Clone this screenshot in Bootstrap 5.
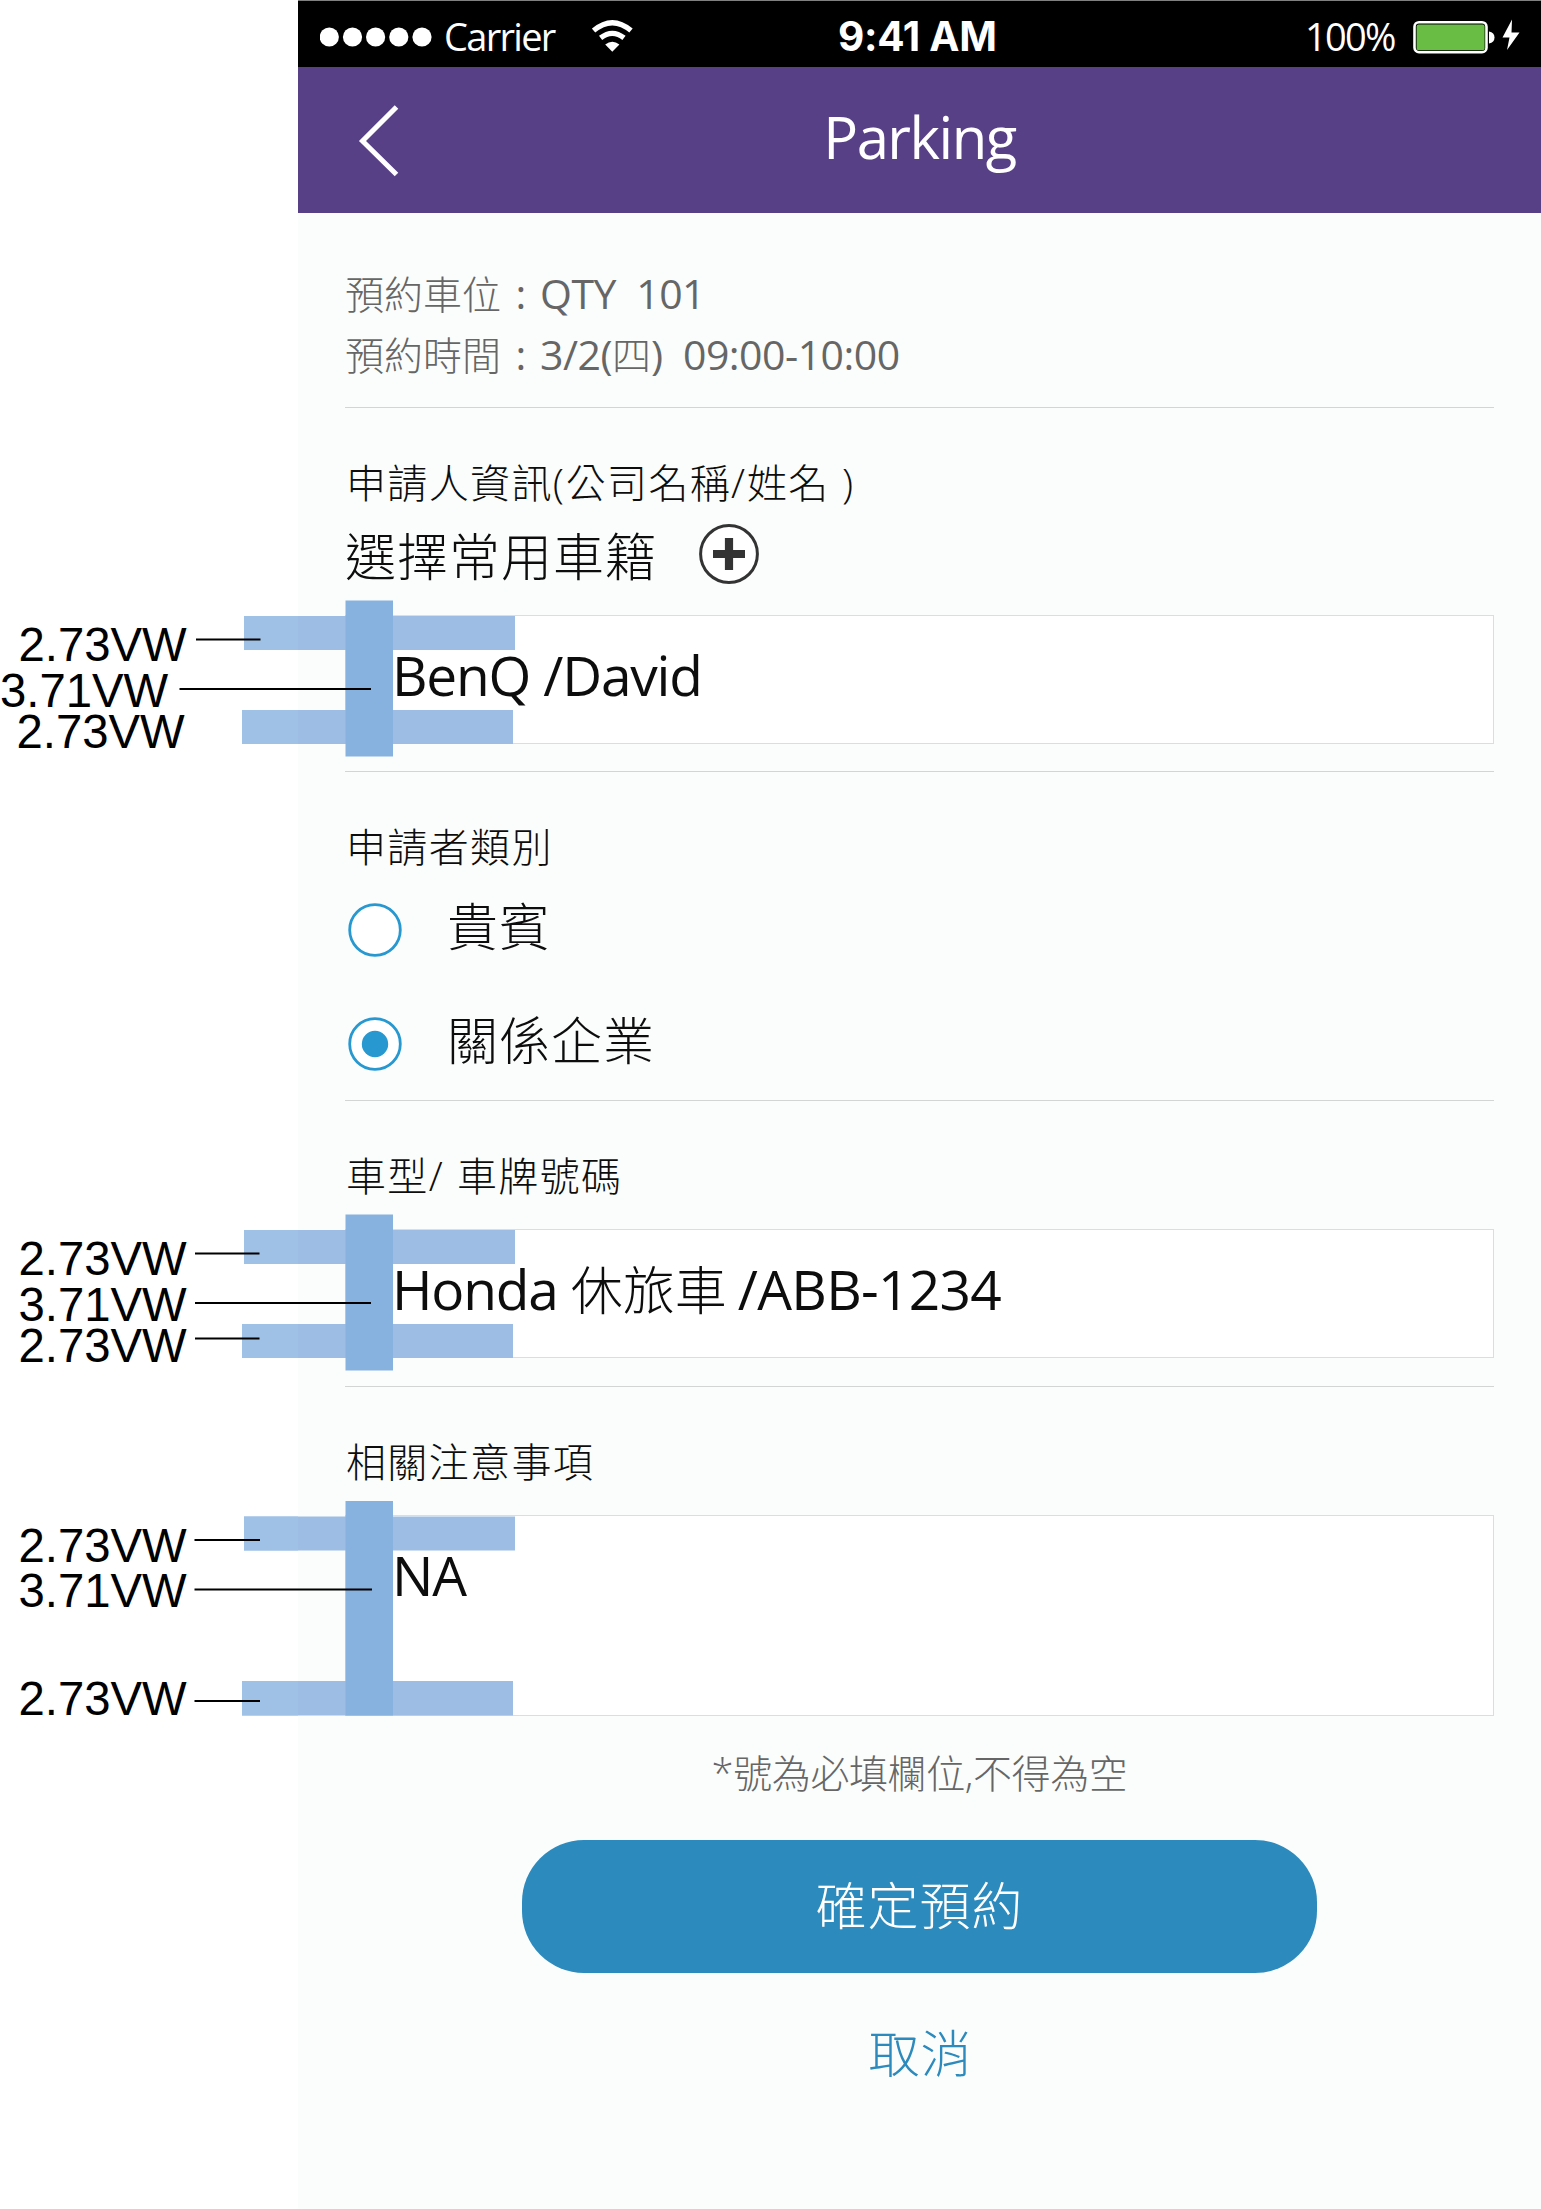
<!DOCTYPE html>
<html lang="zh-Hant">
<head>
<meta charset="utf-8">
<meta name="viewport" content="width=device-width, initial-scale=1">
<title>Parking</title>
<link href="https://cdn.jsdelivr.net/npm/bootstrap@5.3.0/dist/css/bootstrap.min.css" rel="stylesheet">
<style>
body{background:#fff;font-family:"Noto Sans CJK TC",sans-serif;color:#0d0d0d;font-weight:300;overflow-x:hidden}
.phone{width:1243px;height:2209px;background:#fbfdfc}
.lat{font-family:"Open Sans","Noto Sans CJK TC",sans-serif;font-weight:400;white-space:pre}
.statusbar{height:67px;background:#000;color:#fff;white-space:nowrap;padding-left:22px;padding-top:2px;border-top:1px solid #808080}
.statusbar svg{display:block;flex:none}
.status-text{font-family:"Open Sans",sans-serif;font-weight:400;font-size:38px;letter-spacing:-1.7px;line-height:56px;padding-top:5px}
.carrier{margin-left:11px;width:148px}
.clock{font-family:Inter,sans-serif;font-weight:700;font-size:40.5px;letter-spacing:-.3px;line-height:56px;margin-left:205px;width:159px;padding-top:6px}
.percent{margin-left:308px;width:108px}
.titlebar{height:146px;background:#584087;color:#fff}
.titlebar h1{font-size:58px;line-height:80px;letter-spacing:-1.5px;padding-bottom:6px;margin-right:104px}
.back{width:50px;height:80px;margin-left:54px}
.sect{margin:0 47px;border-bottom:1px solid #d3d5d4;white-space:nowrap;padding-top:43px}
.s-info{height:195px;padding-top:50px;color:#666}
.s-applicant{height:364px}
.s-type{height:329px}
.s-car{height:286px}
.s-notes{border-bottom:0}
.info{font-size:39px;line-height:59.5px}
.info .lat{font-size:41px;letter-spacing:-.5px}
.info .colon{display:inline-block;width:39px;text-align:center}
.lab{font-size:40px;line-height:60px;letter-spacing:1.35px;padding-left:1px}
.lab .lat{font-size:41px;letter-spacing:1.8px;font-weight:300}
.big{font-size:51px;letter-spacing:1px}
.pick{height:84px}
.pick svg{margin-left:41px;margin-top:-1px}
.field{height:129px;background:#fff;border:1px solid #dcdedd;padding:21px 0 0 46px}
.field.tall{height:201px;padding-top:21px}
.slot-a{margin-top:19px}
.slot-b{margin-top:24px}
.slot-c{margin-top:25px}
.val{font-size:55px;line-height:76px;letter-spacing:-1.2px}
.cj{font-size:52px;font-weight:300;letter-spacing:0;margin-right:-2px}
.plate{letter-spacing:-.7px}
.opt{height:114px}
.opt .big{margin-left:44px;padding-bottom:12px}
.opts{margin-top:-2px}
.spec{position:absolute;left:-345px;top:-20px;pointer-events:none}
.spec text{font:47.3px "Liberation Sans",Arial,sans-serif;fill:#000}
.hint{font-size:39px;line-height:60px;letter-spacing:-.4px;color:#666;margin-top:25px}
.hint .lat{font-size:40px;font-weight:300}
.btn-book{width:795px;height:133px;border-radius:62px;background:#2c8abd;color:#fff;font-weight:300;margin-top:37px;padding:0 0 6px}
.cancel{color:#2c8abd;line-height:60px;margin-top:48px;margin-left:2px;text-decoration:none}
</style>
<script src="https://cdn.jsdelivr.net/npm/bootstrap@5.3.0/dist/js/bootstrap.bundle.min.js"></script>
</head>
<body>
<main class="phone ms-auto">
  <div class="statusbar d-flex align-items-start">
    <svg width="113" height="64" fill="#fff"><circle cx="9.3" cy="34" r="9.6"/><circle cx="32.5" cy="34" r="9.6"/><circle cx="55.6" cy="34" r="9.6"/><circle cx="78.8" cy="34" r="9.6"/><circle cx="102" cy="34" r="9.6"/></svg>
    <span class="status-text carrier">Carrier</span>
    <svg width="41" height="64" fill="none" stroke="#fff"><path d="M1.600 27.600Q20.300 11.800 39 27.600" stroke-width="5.200"/><path d="M8.600 34.900Q20.300 25.800 32 34.900" stroke-width="5.200"/><path d="M13.200 41.500Q20.300 35.800 27.400 41.500L20.300 48.800Z" fill="#fff" stroke="none"/></svg>
    <span class="clock">9:41 AM</span>
    <span class="status-text percent">100%</span>
    <svg width="110" height="64"><rect x="1.500" y="19.200" width="72" height="30" rx="4.500" fill="none" stroke="#fff" stroke-width="2.600"/><rect x="3.600" y="21.400" width="68" height="25.800" rx="2" fill="#69bd45"/><path d="M76 28.500Q81.500 29.500 81.500 34.500T76 40.500Z" fill="#fff"/><path d="M99 16.500L89.500 34.500H96.500L94 47L106.500 29.500H98.500Z" fill="#fff"/></svg>
  </div>
  <div class="titlebar d-flex align-items-center">
    <svg class="back" viewBox="0 0 50 80" fill="none" stroke="#fff" stroke-width="5"><path d="M44.500 7L10.500 41L44.500 74.500"/></svg>
    <h1 class="lat mb-0 flex-fill text-center">Parking</h1>
  </div>

  <section class="sect s-info">
    <div class="info">預約車位<span class="lat colon">:</span><span class="lat">QTY  101</span></div>
    <div class="info">預約時間<span class="lat colon">:</span><span class="lat">3/2(</span>四<span class="lat">)  09:00-10:00</span></div>
  </section>

  <section class="sect s-applicant">
    <div class="lab">申請人資訊<span class="lat">(</span>公司名稱<span class="lat">/</span>姓名<span class="lat"> )</span></div>
    <div class="pick d-flex align-items-center"><span class="big">選擇常用車籍</span>
      <svg width="62" height="62" fill="none" stroke="#333"><circle cx="31" cy="31" r="28.400" stroke-width="3" fill="#fff"/><path d="M15 31H47M31 15V47" stroke-width="8.200"/></svg></div>
    <div class="position-relative slot-a">
      <div class="field"><div class="val lat">BenQ /David</div></div>
      <svg class="spec" width="530" height="180"><path d="M244 21H515V55H244ZM242 115H513V149H242Z" fill="#9dbde4"/><path d="M244 21H298V55H244ZM242 115H298V149H242Z" fill="#9fc1e6"/><path d="M345.500 5.500H393V161.500H345.500Z" fill="#87b1df"/><path d="M196 44.500H260.500M179.500 94H371" stroke="#000" stroke-width="2"/><text x="18.500" y="66">2.73VW</text><text x="0" y="111.500">3.71VW</text><text x="16.500" y="152.500">2.73VW</text></svg>
    </div>
  </section>

  <section class="sect s-type">
    <div class="lab">申請者類別</div>
    <div class="opts">
      <div class="opt d-flex align-items-center"><svg width="58" height="58"><circle cx="30" cy="29" r="25.300" fill="#fff" stroke="#2898d1" stroke-width="2.800"/></svg><span class="big">貴賓</span></div>
      <div class="opt d-flex align-items-center"><svg width="58" height="58"><circle cx="30" cy="29" r="25.300" fill="#fff" stroke="#2898d1" stroke-width="2.800"/><circle cx="30" cy="29" r="13.200" fill="#2898d1"/></svg><span class="big">關係企業</span></div>
    </div>
  </section>

  <section class="sect s-car">
    <div class="lab">車型<span class="lat">/ </span>車牌號碼</div>
    <div class="position-relative slot-b">
      <div class="field"><div class="val lat">Honda <span class="cj">休旅車</span> <span class="plate">/ABB-1234</span></div></div>
      <svg class="spec" width="530" height="180"><path d="M244 21H515V55H244ZM242 115H513V149H242Z" fill="#9dbde4"/><path d="M244 21H298V55H244ZM242 115H298V149H242Z" fill="#9fc1e6"/><path d="M345.500 5.500H393V161.500H345.500Z" fill="#87b1df"/><path d="M195 44.500H259.500M195 94H371M195 129.500H259.500" stroke="#000" stroke-width="2"/><text x="18.500" y="66">2.73VW</text><text x="18.500" y="111.500">3.71VW</text><text x="18.500" y="152.500">2.73VW</text></svg>
    </div>
  </section>

  <section class="sect s-notes">
    <div class="lab">相關注意事項</div>
    <div class="position-relative slot-c">
      <div class="field tall"><div class="val lat">NA</div></div>
      <svg class="spec" width="530" height="240"><path d="M244 21.500H515V55.500H244ZM242 186H513V220.500H242Z" fill="#9dbde4"/><path d="M244 21.500H298V55.500H244ZM242 186H298V220.500H242Z" fill="#9fc1e6"/><path d="M345.500 6H393V220.500H345.500Z" fill="#87b1df"/><path d="M194.500 45H260M194.500 94.500H372M194.500 206H260" stroke="#000" stroke-width="2"/><text x="18.500" y="66.500">2.73VW</text><text x="18.500" y="112">3.71VW</text><text x="18.500" y="220">2.73VW</text></svg>
    </div>
  </section>

  <div class="d-flex flex-column align-items-center">
    <div class="hint"><span class="lat">*</span>號為必填欄位<span class="lat">,</span>不得為空</div>
    <button type="button" class="btn btn-book big">確定預約</button>
    <a class="cancel big">取消</a>
  </div>
</main>
</body></html>
